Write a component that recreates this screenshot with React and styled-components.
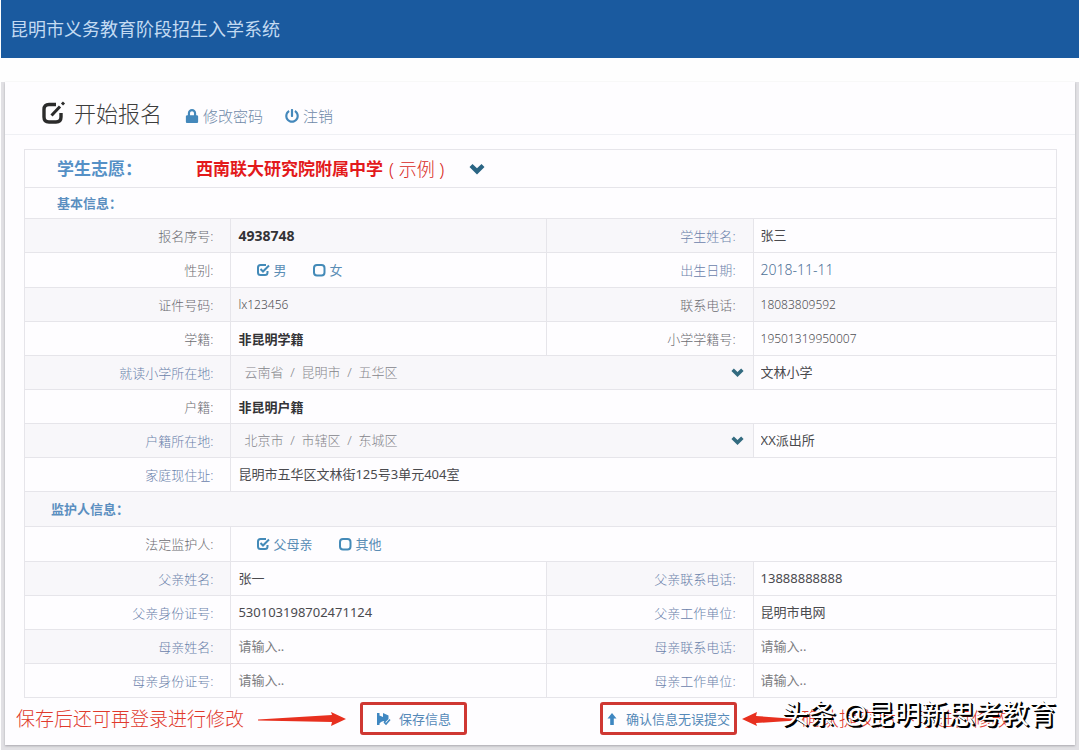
import React, { useState } from "react";
import styled, { createGlobalStyle, css } from "styled-components";
import { FaLock, FaPowerOff } from "react-icons/fa";

export default function App() {
  const [gender, setGender] = useState("男");
  const [guardian, setGuardian] = useState("父母亲");

  return (
    <Page>
      <GlobalStyle />

      <TopBar>
        <SystemName>昆明市义务教育阶段招生入学系统</SystemName>
      </TopBar>

      <Frame>
        <Panel>
          <PanelHeader>
            <EditIcon />
            <PanelTitle>开始报名</PanelTitle>
            <HeaderLink href="#password">
              <FaLock size={14} />
              修改密码
            </HeaderLink>
            <HeaderLink href="#logout">
              <FaPowerOff size={14} />
              注销
            </HeaderLink>
          </PanelHeader>

          <FormTable>
            <colgroup>
              <LabelCol />
              <ValueCol />
              <LabelCol />
              <col />
            </colgroup>
            <tbody>
              <Row $height={38}>
                <Cell colSpan={4}>
                  <Wish>
                    <WishLabel id="wish">学生志愿：</WishLabel>
                    <WishButton type="button" aria-labelledby="wish">
                      <strong>西南联大研究院附属中学</strong>
                      <WishNote>( 示例 )</WishNote>
                      <ChevronIcon size={16} />
                    </WishButton>
                  </Wish>
                </Cell>
              </Row>

              <Row $height={31}>
                <SectionCell colSpan={4} $indent={32}>
                  基本信息：
                </SectionCell>
              </Row>

              <Row $striped>
                <FieldLabel tone="gray">报名序号</FieldLabel>
                <StaticCell $bold $size={14}>
                  4938748
                </StaticCell>
                <FieldLabel htmlFor="name">学生姓名</FieldLabel>
                <InputCell id="name" value="张三" />
              </Row>

              <Row $height={35}>
                <FieldLabel tone="gray">性别</FieldLabel>
                <Cell>
                  <ChoiceGroup
                    name="gender"
                    options={["男", "女"]}
                    value={gender}
                    onChange={setGender}
                  />
                </Cell>
                <FieldLabel>出生日期</FieldLabel>
                <StaticCell $blue $size={14}>
                  2018-11-11
                </StaticCell>
              </Row>

              <Row $striped>
                <FieldLabel tone="gray">证件号码</FieldLabel>
                <StaticCell $size={12}>lx123456</StaticCell>
                <FieldLabel tone="gray">联系电话</FieldLabel>
                <StaticCell $size={12}>18083809592</StaticCell>
              </Row>

              <Row>
                <FieldLabel tone="gray">学籍</FieldLabel>
                <StaticCell $bold>非昆明学籍</StaticCell>
                <FieldLabel tone="gray">小学学籍号</FieldLabel>
                <StaticCell $size={12}>19501319950007</StaticCell>
              </Row>

              <Row $striped>
                <FieldLabel htmlFor="schoolArea">就读小学所在地</FieldLabel>
                <AreaCell id="schoolArea" parts={["云南省", "昆明市", "五华区"]} />
                <InputCell value="文林小学" label="就读小学" />
              </Row>

              <Row>
                <FieldLabel tone="gray">户籍</FieldLabel>
                <StaticCell $bold colSpan={3}>
                  非昆明户籍
                </StaticCell>
              </Row>

              <Row $striped>
                <FieldLabel htmlFor="homeArea">户籍所在地</FieldLabel>
                <AreaCell id="homeArea" parts={["北京市", "市辖区", "东城区"]} />
                <InputCell value="XX派出所" label="派出所" />
              </Row>

              <Row>
                <FieldLabel htmlFor="address">家庭现住址</FieldLabel>
                <InputCell
                  id="address"
                  colSpan={3}
                  value="昆明市五华区文林街125号3单元404室"
                />
              </Row>

              <Row $striped $height={35}>
                <SectionCell colSpan={4} $indent={26}>
                  监护人信息：
                </SectionCell>
              </Row>

              <Row $height={35}>
                <FieldLabel tone="gray">法定监护人</FieldLabel>
                <Cell colSpan={3}>
                  <ChoiceGroup
                    name="guardian"
                    options={["父母亲", "其他"]}
                    value={guardian}
                    onChange={setGuardian}
                  />
                </Cell>
              </Row>

              <Row $striped>
                <FieldLabel htmlFor="fatherName">父亲姓名</FieldLabel>
                <InputCell id="fatherName" value="张一" />
                <FieldLabel htmlFor="fatherPhone">父亲联系电话</FieldLabel>
                <InputCell id="fatherPhone" value="13888888888" />
              </Row>

              <Row>
                <FieldLabel htmlFor="fatherId">父亲身份证号</FieldLabel>
                <InputCell id="fatherId" value="530103198702471124" />
                <FieldLabel htmlFor="fatherWork">父亲工作单位</FieldLabel>
                <InputCell id="fatherWork" value="昆明市电网" />
              </Row>

              <Row $striped>
                <FieldLabel htmlFor="motherName">母亲姓名</FieldLabel>
                <InputCell id="motherName" />
                <FieldLabel htmlFor="motherPhone">母亲联系电话</FieldLabel>
                <InputCell id="motherPhone" />
              </Row>

              <Row>
                <FieldLabel htmlFor="motherId">母亲身份证号</FieldLabel>
                <InputCell id="motherId" />
                <FieldLabel htmlFor="motherWork">母亲工作单位</FieldLabel>
                <InputCell id="motherWork" />
              </Row>
            </tbody>
          </FormTable>

          <Footer>
            <FooterGroup $gap={14}>
              <Hint>保存后还可再登录进行修改</Hint>
              <RightArrow />
              <ActionButton type="button" $gap={8} $pad={13}>
                <SaveIcon />
                保存信息
              </ActionButton>
            </FooterGroup>
            <FooterGroup $gap={5}>
              <ActionButton type="button" $gap={9} $pad={4}>
                <UpIcon />
                确认信息无误提交
              </ActionButton>
              <LeftArrow />
              <Hint>确认提交后不可进行修改</Hint>
            </FooterGroup>
            <Watermark>头条 @昆明新思考教育</Watermark>
          </Footer>
        </Panel>
      </Frame>
    </Page>
  );
}

function FieldLabel({ children, htmlFor, tone = "blue" }) {
  return (
    <LabelCell scope="row" $tone={tone}>
      {htmlFor ? <label htmlFor={htmlFor}>{children}:</label> : <>{children}:</>}
    </LabelCell>
  );
}

function InputCell({ id, value, label, colSpan }) {
  return (
    <Cell colSpan={colSpan}>
      <TextInput
        id={id}
        type="text"
        aria-label={label}
        defaultValue={value}
        placeholder="请输入.."
      />
    </Cell>
  );
}

function AreaCell({ id, parts }) {
  return (
    <Cell colSpan={2}>
      <AreaBox>
        <AreaSelect id={id}>
          <option>{parts.join("\u00a0\u00a0/\u00a0\u00a0")}</option>
        </AreaSelect>
        <ChevronIcon size={13} />
      </AreaBox>
    </Cell>
  );
}

function ChoiceGroup({ name, options, value, onChange }) {
  return (
    <Choices>
      {options.map((option) => (
        <Choice key={option}>
          <ChoiceBox>
            <ChoiceInput
              type="radio"
              name={name}
              checked={value === option}
              onChange={() => onChange(option)}
            />
            <CheckIcon checked={value === option} />
          </ChoiceBox>
          {option}
        </Choice>
      ))}
    </Choices>
  );
}

function ChevronIcon({ size }) {
  return (
    <svg width={size} height={size} viewBox="0 0 16 16" fill="currentColor">
      <path d="M0.500 6L3.500 3L8 7.300L12.500 3L15.500 6L8 13.500Z" />
    </svg>
  );
}

function CheckIcon({ checked }) {
  return (
    <svg width="14" height="14" viewBox="0 0 14 14" fill="none" stroke="currentColor" strokeWidth="2">
      {checked ? (
        <>
          <path d="M10 2H4.500Q2 2 2 4.500V9.500Q2 12 4.500 12H9Q11.500 12 11.500 9.500V8" />
          <path d="M4.500 6L7 8.500L13 2.500" />
        </>
      ) : (
        <rect x="2" y="2" width="10.500" height="10.500" rx="3" />
      )}
    </svg>
  );
}

function EditIcon() {
  return (
    <svg width="25" height="24" viewBox="0 0 25 24" fill="none" stroke="#2b2b2b">
      <path
        d="M15 3.500H8Q3 3.500 3 8.500V16Q3 21 8 21H15Q20 21 20 16V12"
        strokeWidth="3.400"
      />
      <path d="M10.500 14.500L19 5.500" strokeWidth="3" />
      <path d="M21 3.500L23 1.500" strokeWidth="3" />
    </svg>
  );
}

function SaveIcon() {
  return (
    <svg width="15" height="14" viewBox="0 0 15 14" fill="#3f87c1">
      <path d="M1 1H3.500V3.500L7 5V1L12.500 3.500V7L9 10.500L7.500 9L5 10L3.500 11.500V13H1Z" />
      <path d="M8 10L10 12L14 7.500" fill="none" stroke="#3f87c1" strokeWidth="1.600" />
    </svg>
  );
}

function UpIcon() {
  return (
    <svg width="10" height="14" viewBox="0 0 10 14" fill="#3f87c1">
      <path d="M5 1L9.500 6.500H6.800V13H3.200V6.500H0.500Z" />
    </svg>
  );
}

function RightArrow() {
  return (
    <svg width="88" height="16" viewBox="0 0 88 16" fill="#e8301f">
      <path d="M0 8.500L74 4L73 1L88 8L73 15L74 11L0 9.500Z" />
    </svg>
  );
}

function LeftArrow() {
  return (
    <svg width="54" height="16" viewBox="0 0 54 16" fill="#e8301f">
      <path d="M0 8L15 1L14 5L54 8V9.500L14 12L15 15Z" />
    </svg>
  );
}

const GlobalStyle = createGlobalStyle`
  * {
    box-sizing: border-box;
  }

  body {
    margin: 0;
    background: #fefefe;
    font-family: "Noto Sans", "Noto Sans CJK SC", sans-serif;
    font-size: 13px;
    color: #4a4a4e;
  }

  input,
  select,
  button {
    font-family: inherit;
  }
`;

const Page = styled.div`
  padding: 0 1px;
`;

const TopBar = styled.header`
  display: flex;
  align-items: center;
  height: 58px;
  padding: 0 9px;
  background: #1a5a9f;
`;

const SystemName = styled.h1`
  margin: 0;
  font-size: 18px;
  line-height: 24px;
  font-weight: 400;
  color: #c3daf2;
`;

const Frame = styled.div`
  margin-top: 24px;
  padding: 0 4px 5px;
  background: #e1e0e4;
`;

const Panel = styled.main`
  background: #fefdff;
  box-shadow: 0 1px 2px #a9a8ad;
`;

const PanelHeader = styled.div`
  display: flex;
  align-items: center;
  height: 53px;
  padding: 10px 36px 0;
  border-bottom: 1px solid #eff0f4;
`;

const PanelTitle = styled.h2`
  margin: 0 1px 0 8px;
  font-size: 22px;
  line-height: 28px;
  font-weight: 300;
  color: #3c3c3c;
`;

const HeaderLink = styled.a`
  display: flex;
  align-items: center;
  gap: 4px;
  margin-left: 22px;
  padding-top: 6px;
  font-size: 15px;
  line-height: 20px;
  font-weight: 300;
  color: #6f89a8;
  text-decoration: none;

  svg {
    color: #4488bb;
  }
`;

const FormTable = styled.table`
  width: calc(100% - 37px);
  margin: 14px 18px 0 19px;
  table-layout: fixed;
  border-collapse: collapse;
`;

const LabelCol = styled.col`
  width: 20%;
`;

const ValueCol = styled.col`
  width: 30.6%;
`;

const Row = styled.tr`
  height: ${({ $height = 34 }) => $height}px;
  background: ${({ $striped }) => ($striped ? "#f8f7fa" : "#fefdff")};
`;

const cellBase = css`
  padding: 0;
  border: 1px solid #e6e5ea;
`;

const Cell = styled.td`
  ${cellBase}
`;

const LabelCell = styled.th`
  ${cellBase}
  padding-right: 17px;
  line-height: 20px;
  font-weight: 300;
  text-align: right;
  color: ${({ $tone }) => ($tone === "gray" ? "#6c6c72" : "#6b82ab")};
`;

const StaticCell = styled.td`
  ${cellBase}
  padding: 0 7px;
  font-size: ${({ $size = 13 }) => $size}px;
  line-height: 20px;
  font-weight: ${({ $bold }) => ($bold ? 700 : 300)};
  color: ${({ $bold, $blue }) => ($bold ? "#333336" : $blue ? "#4f7298" : "#505054")};
`;

const SectionCell = styled.th`
  ${cellBase}
  padding-left: ${({ $indent }) => $indent}px;
  line-height: 20px;
  font-weight: 700;
  text-align: left;
  color: #5b8fc0;
`;

const Wish = styled.div`
  display: flex;
  align-items: center;
  padding-left: 32px;
  font-size: 17px;
  line-height: 24px;
`;

const WishLabel = styled.span`
  width: 139px;
  font-weight: 700;
  color: #5590c6;
`;

const WishButton = styled.button`
  display: flex;
  align-items: center;
  padding: 0;
  border: 0;
  background: none;
  font-size: 17px;
  line-height: 24px;
  color: #e3191b;
  cursor: pointer;

  strong {
    font-weight: 700;
  }

  svg {
    color: #2b6584;
  }
`;

const WishNote = styled.span`
  margin: 0 25px 0 6px;
  font-size: 18px;
  font-weight: 300;
  color: #d8281c;
`;

const TextInput = styled.input`
  display: block;
  width: 100%;
  height: 33px;
  padding: 0 7px 2px;
  border: 0;
  background: #fefdff;
  font-size: 13px;
  color: #4a4a4e;

  &::placeholder {
    color: #7b7b80;
    opacity: 1;
  }
`;

const AreaBox = styled.div`
  position: relative;

  svg {
    position: absolute;
    top: 10px;
    right: 9px;
    color: #336b80;
    pointer-events: none;
  }
`;

const AreaSelect = styled.select`
  display: block;
  width: 100%;
  height: 33px;
  padding: 0 30px 2px 13px;
  border: 0;
  appearance: none;
  background: transparent;
  font-size: 13px;
  font-weight: 300;
  color: #85858b;
`;

const Choices = styled.div`
  display: flex;
  gap: 26px;
  padding-left: 25px;
`;

const Choice = styled.label`
  display: flex;
  align-items: center;
  gap: 3px;
  line-height: 20px;
  color: #5a8db5;
`;

const ChoiceBox = styled.span`
  position: relative;
  width: 14px;
  height: 14px;
  color: #438ab8;

  svg {
    position: absolute;
    inset: 0;
    pointer-events: none;
  }
`;

const ChoiceInput = styled.input`
  display: block;
  width: 14px;
  height: 14px;
  margin: 0;
  appearance: none;
`;

const Footer = styled.div`
  position: relative;
  display: grid;
  grid-template-columns: 595fr 475fr;
  align-items: center;
  height: 47px;
  padding-bottom: 6px;
`;

const FooterGroup = styled.div`
  display: flex;
  align-items: center;
  gap: ${({ $gap }) => $gap}px;
  white-space: nowrap;

  &:first-child {
    padding-left: 11px;
  }
`;

const Hint = styled.span`
  font-size: 19px;
  line-height: 24px;
  font-weight: 300;
  color: #e0392c;
`;

const ActionButton = styled.button`
  display: flex;
  align-items: center;
  gap: ${({ $gap }) => $gap}px;
  height: 33px;
  padding: 0 ${({ $pad }) => $pad}px;
  border: 3px solid #cf3732;
  border-radius: 3px;
  background: #fefdff;
  font-size: 13px;
  color: #5589b8;
  white-space: nowrap;
  cursor: pointer;
`;

const Watermark = styled.span`
  position: absolute;
  right: 19px;
  bottom: 13px;
  font-size: 27px;
  line-height: 36px;
  color: #ffffff;
  text-shadow: 1px 1px 0 #000000, 2px 2px 0 #000000;
  white-space: nowrap;
`;
